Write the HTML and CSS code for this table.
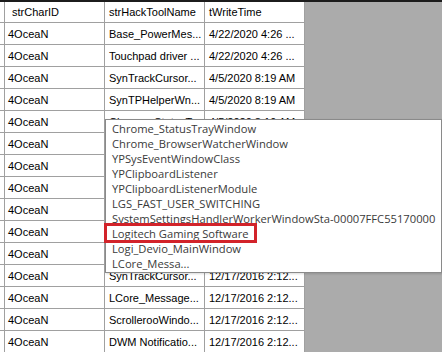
FILE: index.html
```html
<!DOCTYPE html>
<html>
<head>
<meta charset="utf-8">
<link rel="stylesheet" href="styles.css">
</head>
<body>
<div class="screen">
  <div class="topline"></div>
  <div class="area">
    <div class="grid">
      <div class="row head"><div class="c0"></div><div class="c">strCharID</div><div class="c">strHackToolName</div><div class="c">tWriteTime</div></div>
      <div class="row"><div class="c0"></div><div class="c">4OceaN</div><div class="c">Base_PowerMes...</div><div class="c">4/22/2020 4:26 ...</div></div>
      <div class="row"><div class="c0"></div><div class="c">4OceaN</div><div class="c">Touchpad driver ...</div><div class="c">4/22/2020 4:26 ...</div></div>
      <div class="row"><div class="c0"></div><div class="c">4OceaN</div><div class="c">SynTrackCursor...</div><div class="c">4/5/2020 8:19 AM</div></div>
      <div class="row"><div class="c0"></div><div class="c">4OceaN</div><div class="c">SynTPHelperWn...</div><div class="c">4/5/2020 8:19 AM</div></div>
      <div class="row"><div class="c0"></div><div class="c">4OceaN</div><div class="c">Chrome_StatusT...</div><div class="c">4/5/2020 8:19 AM</div></div>
      <div class="row"><div class="c0"></div><div class="c">4OceaN</div><div class="c"></div><div class="c"></div></div>
      <div class="row"><div class="c0"></div><div class="c">4OceaN</div><div class="c"></div><div class="c"></div></div>
      <div class="row"><div class="c0"></div><div class="c">4OceaN</div><div class="c"></div><div class="c"></div></div>
      <div class="row"><div class="c0"></div><div class="c">4OceaN</div><div class="c"></div><div class="c"></div></div>
      <div class="row"><div class="c0"></div><div class="c">4OceaN</div><div class="c"></div><div class="c"></div></div>
      <div class="row"><div class="c0"></div><div class="c">4OceaN</div><div class="c"></div><div class="c"></div></div>
      <div class="row"><div class="c0"></div><div class="c">4OceaN</div><div class="c">SynTrackCursor...</div><div class="c">12/17/2016 2:12...</div></div>
      <div class="row"><div class="c0"></div><div class="c">4OceaN</div><div class="c">LCore_Message...</div><div class="c">12/17/2016 2:12...</div></div>
      <div class="row"><div class="c0"></div><div class="c">4OceaN</div><div class="c">ScrollerooWindo...</div><div class="c">12/17/2016 2:12...</div></div>
      <div class="row"><div class="c0"></div><div class="c">4OceaN</div><div class="c">DWM Notificatio...</div><div class="c">12/17/2016 2:12...</div></div>
    </div>
    <ul class="popup">
      <li>Chrome_StatusTrayWindow</li>
      <li>Chrome_BrowserWatcherWindow</li>
      <li>YPSysEventWindowClass</li>
      <li>YPClipboardListener</li>
      <li>YPClipboardListenerModule</li>
      <li>LGS_FAST_USER_SWITCHING</li>
      <li>SystemSettingsHandlerWorkerWindowSta-00007FFC55170000</li>
      <li>Logitech Gaming Software</li>
      <li>Logi_Devio_MainWindow</li>
      <li>LCore_Messa...</li>
    </ul>
    <div class="mark"></div>
  </div>
</div>
</body>
</html>
```

FILE: styles.css
```css
html, body {
  margin: 0;
  padding: 0;
}
body {
  width: 442px;
  height: 352px;
  overflow: hidden;
  background: #ababab;
}
.screen {
  width: 442px;
  height: 352px;
  display: flex;
  flex-direction: column;
}
.topline {
  height: 2px;
  background: #1c1c1c;
  flex: none;
}
.area {
  position: relative;
  flex: 1;
  overflow: hidden;
}
.grid {
  width: 305px;
  background: #fff;
  font-family: "Liberation Sans", Arial, sans-serif;
  font-size: 11px;
  color: #000;
}
.row {
  display: grid;
  grid-template-columns: 5px 100px 100px 100px;
  height: 22px;
  box-sizing: border-box;
  border-bottom: 1px solid #a0a0a0;
}
.row.head {
  height: 21px;
}
.c0, .c {
  box-sizing: border-box;
  border-right: 1px solid #a0a0a0;
}
.c {
  display: flex;
  align-items: center;
  padding-left: 3px;
  white-space: nowrap;
  overflow: hidden;
}
.row .c:nth-child(3), .row .c:nth-child(4) {
  padding-left: 4px;
}
.head .c {
  padding-left: 7px;
}
.popup {
  position: absolute;
  left: 105px;
  top: 117px;
  width: 337px;
  height: 154px;
  box-sizing: border-box;
  margin: 0;
  padding: 1px 0 0 6px;
  list-style: none;
  background: #fff;
  border: 1px solid #8a8a8a;
  box-shadow: 1px 1px 2px rgba(0,0,0,0.15);
  font-family: "Open Sans", "Noto Sans", sans-serif;
  font-size: 11.2px;
  color: #3a3a3a;
}
.popup li {
  height: 15px;
  line-height: 15px;
  white-space: nowrap;
}
.mark {
  position: absolute;
  left: 104px;
  top: 221px;
  width: 153px;
  height: 20px;
  box-sizing: border-box;
  border: 3px solid #d2232a;
}
```
